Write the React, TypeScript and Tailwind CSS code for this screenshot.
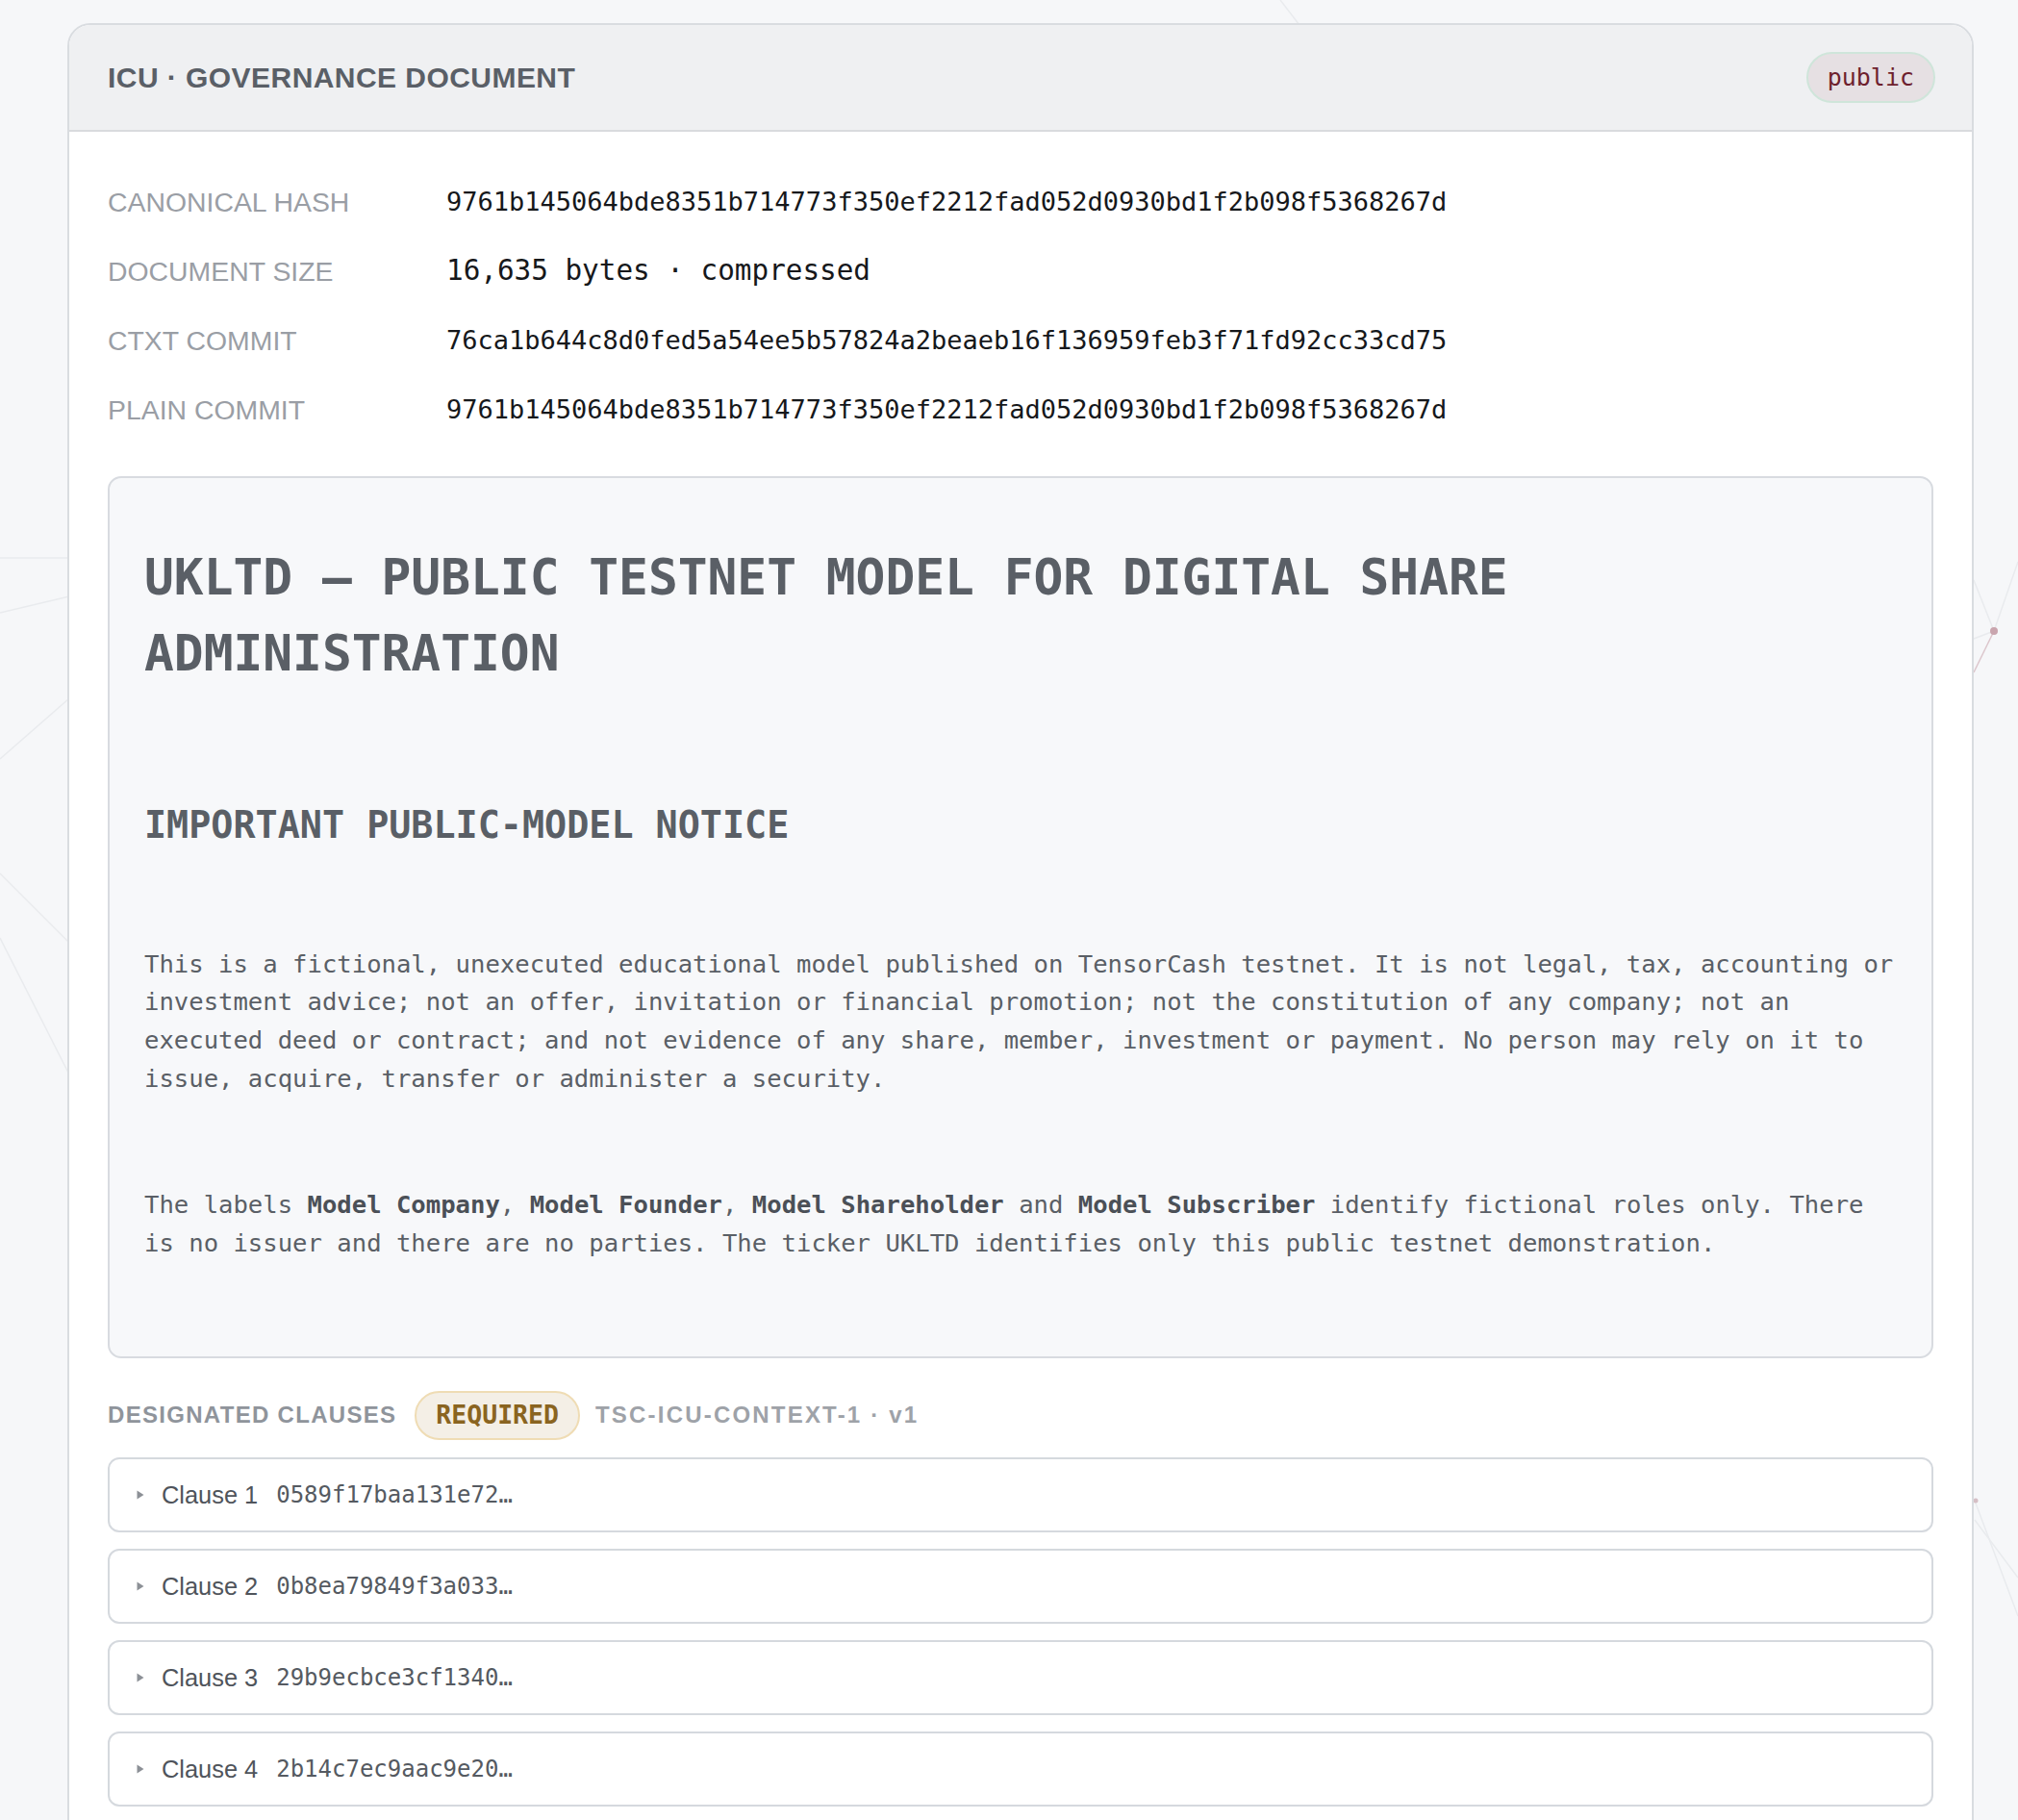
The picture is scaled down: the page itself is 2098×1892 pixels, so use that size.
import React from "react";

const clauses = [
  { n: 1, h: "0589f17baa131e72…" },
  { n: 2, h: "0b8ea79849f3a033…" },
  { n: 3, h: "29b9ecbce3cf1340…" },
  { n: 4, h: "2b14c7ec9aac9e20…" },
];

const meta = [
  { k: "Canonical hash", v: "9761b145064bde8351b714773f350ef2212fad052d0930bd1f2b098f5368267d", big: false },
  { k: "Document size", v: "16,635 bytes · compressed", big: true },
  { k: "Ctxt commit", v: "76ca1b644c8d0fed5a54ee5b57824a2beaeb16f136959feb3f71fd92cc33cd75", big: false },
  { k: "Plain commit", v: "9761b145064bde8351b714773f350ef2212fad052d0930bd1f2b098f5368267d", big: false },
];

function Background() {
  return (
    <svg className="absolute inset-0 h-full w-full" width="2098" height="1892" viewBox="0 0 2098 1892" fill="none">
      <g stroke="#e9ebee" strokeWidth="1.5">
        <line x1="1331" y1="0" x2="1351" y2="26" />
        <line x1="0" y1="580" x2="72" y2="580" />
        <line x1="0" y1="637" x2="72" y2="620" />
        <line x1="0" y1="789" x2="72" y2="726" />
        <line x1="0" y1="908" x2="72" y2="980" />
        <line x1="0" y1="975" x2="72" y2="1117" />
        <line x1="2073" y1="656" x2="2098" y2="584" />
        <line x1="2052" y1="603" x2="2073" y2="656" />
        <line x1="2052" y1="664" x2="2073" y2="656" />
        <line x1="2053" y1="1560" x2="2098" y2="1680" />
        <line x1="2053" y1="1580" x2="2098" y2="1640" />
      </g>
      <line x1="2052" y1="699" x2="2073" y2="656" stroke="#dcc6cc" strokeWidth="1.5" />
      <circle cx="2073" cy="656" r="4" fill="#c9a5ae" />
      <circle cx="2054" cy="1560" r="2.5" fill="#d6bfc5" />
    </svg>
  );
}

export default function App() {
  return (
    <div className="relative h-[1892px] w-full overflow-hidden bg-[#f6f7f9] font-['Liberation_Sans',Arial,sans-serif]">
      <Background />
      <div className="relative pl-[70px] pt-[24px]">
        <div className="w-[1982px] rounded-t-[24px] border-2 border-[#d9dce0] bg-white">
          {/* Header */}
          <div className="flex h-[111px] items-center justify-between rounded-t-[22px] border-b-2 border-[#d9dbde] bg-[#eff0f2] pl-[40px] pr-[38px]">
            <div className="text-[30px] font-bold uppercase tracking-[0.45px] text-[#5a5f67]">
              ICU · Governance document
            </div>
            <div className="flex h-[53px] items-center rounded-full border-2 border-[#cfe5da] bg-[#e6e0e3] px-[20px] font-['DejaVu_Sans_Mono',monospace] text-[25px] text-[#6e1f2e]">
              public
            </div>
          </div>

          {/* Body */}
          <div className="px-[40px] pb-[42px] pt-[37px]">
            <div className="grid grid-cols-[352px_1fr]">
              {meta.map((m) => (
                <React.Fragment key={m.k}>
                  <div className="flex h-[72px] items-center text-[28.4px] uppercase text-[#9a9ea5]">{m.k}</div>
                  <div
                    className={
                      m.big
                        ? "flex h-[72px] items-center font-['DejaVu_Sans_Mono',monospace] text-[29.3px] text-[#16181b]"
                        : "flex h-[72px] items-center font-['DejaVu_Sans_Mono',monospace] text-[27px] text-[#16181b]"
                    }
                  >
                    {m.v}
                  </div>
                </React.Fragment>
              ))}
            </div>

            {/* Document */}
            <div className="mt-[33px] rounded-[14px] border-2 border-[#d8dbe0] bg-[#f7f8fa] px-[36px] pb-[97px] pt-[64px] font-['DejaVu_Sans_Mono',monospace] text-[#5a5f66]">
              <h1 className="text-[51.2px] font-bold leading-[79px] text-[#5a5f66]">
                UKLTD — PUBLIC TESTNET MODEL FOR DIGITAL SHARE ADMINISTRATION
              </h1>
              <h2 className="mt-[109px] text-[38.4px] font-bold leading-[59.5px] text-[#5a5f66]">
                IMPORTANT PUBLIC-MODEL NOTICE
              </h2>
              <p className="mt-[95px] text-[25.6px] leading-[39.7px]">
                This is a fictional, unexecuted educational model published on TensorCash testnet. It is not legal, tax, accounting or investment advice; not an offer, invitation or financial promotion; not the constitution of any company; not an executed deed or contract; and not evidence of any share, member, investment or payment. No person may rely on it to issue, acquire, transfer or administer a security.
              </p>
              <p className="mt-[92px] text-[25.6px] leading-[39.7px]">
                <span className="block">
                  <span>The labels </span>
                  <strong className="font-bold text-[#4b5057]">Model Company</strong>
                  <span>, </span>
                  <strong className="font-bold text-[#4b5057]">Model Founder</strong>
                  <span>, </span>
                  <strong className="font-bold text-[#4b5057]">Model Shareholder</strong>
                  <span> and </span>
                  <strong className="font-bold text-[#4b5057]">Model Subscriber</strong>
                  <span> identify fictional roles only. There</span>
                </span>
                <span className="block">
                  <span>is no issuer and there are no parties. The ticker </span>
                  <code className="font-['DejaVu_Sans_Mono',monospace]">UKLTD</code>
                  <span> identifies only this public testnet demonstration.</span>
                </span>
              </p>
            </div>

            {/* Designated clauses */}
            <div className="mt-[34px] flex h-[51px] items-center">
              <div className="text-[24px] font-bold uppercase tracking-[1.3px] text-[#8f949b]">Designated clauses</div>
              <div className="ml-[19px] flex h-[51px] items-center rounded-full border-2 border-[#efdcb4] bg-[#f4efe6] px-[20px] font-['DejaVu_Sans_Mono',monospace] text-[26.5px] font-bold text-[#8a6420]">
                REQUIRED
              </div>
              <div className="ml-[16px] text-[24px] font-bold tracking-[2.2px] text-[#9ea2a8]">TSC-ICU-CONTEXT-1 · v1</div>
            </div>

            <div className="mt-[18px] flex flex-col gap-[17px]">
              {clauses.map((c) => (
                <div
                  key={c.n}
                  className="flex h-[78px] items-center rounded-[12px] border-2 border-[#d5d9de] bg-white pl-[28px]"
                >
                  <svg width="8" height="10" viewBox="0 0 8 10" className="shrink-0">
                    <polygon points="0.5,0.5 7.5,5 0.5,9.5" fill="#8c9096" />
                  </svg>
                  <span className="ml-[18px] text-[25.4px] text-[#4f545b]">Clause {c.n}</span>
                  <span className="ml-[19px] font-['DejaVu_Sans_Mono',monospace] text-[24px] text-[#555a61]">{c.h}</span>
                </div>
              ))}
            </div>
          </div>
        </div>
      </div>
    </div>
  );
}
